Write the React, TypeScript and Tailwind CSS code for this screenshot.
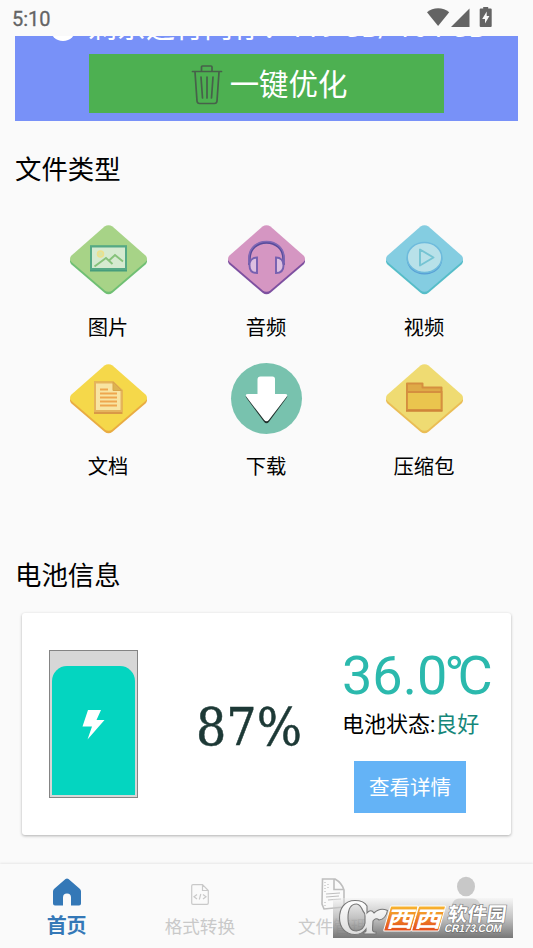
import type { ReactNode } from 'react';

function StatusBar() {
  return (
    <div className="flex h-9 items-start justify-between pl-3 pr-[41px] text-[#646464]">
      <span className="mt-[7px] text-[20px] leading-6 [-webkit-text-stroke:0.3px_#646464]">5:10</span>
      <svg className="mt-[6px]" width="66" height="22" viewBox="426 6 66 22" fill="#646464">
        <path d="M427 12.3C433 7 443.200 7 449.200 12.300L438.100 26Z" />
        <path d="M451 27L469.500 8.500V27Z" />
        <path fillRule="evenodd" d="M483.500 7h5v1.500h2.500q1 0 1 1V26q0 1-1 1h-10q-1 0-1-1V9.500q0-1 1-1h2.500ZM487 11.500L482.500 19h2.800v4.500L489.700 16h-2.700Z" transform="translate(-0.300 0)" />
      </svg>
    </div>
  );
}

function Diamond({ face, edge, children }: { face: string; edge: string; children: ReactNode }) {
  const outline =
    'M34.500 1.600Q38.500 -1.200 42.500 1.600L75.500 30.500Q78.500 33.500 75.500 37L42.500 65.200Q38.500 68.200 34.500 65.200L1.500 37Q-1.500 33.500 1.500 30.500Z';
  return (
    <svg width="77" height="70" viewBox="0 0 77 70">
      <path d={outline} fill={edge} transform="translate(0 2.600)" />
      <path d={outline} fill={face} />
      {children}
    </svg>
  );
}

function PhotoIcon() {
  return (
    <Diamond face="#a7d387" edge="#6fbf73">
      <rect x="20" y="20.500" width="37" height="26" fill="#469d7c" />
      <rect x="21" y="21.500" width="35" height="22.500" fill="#d6ead0" stroke="#55a985" strokeWidth="2" />
      <circle cx="30.500" cy="29" r="3" fill="#d8e4a5" stroke="#ece08c" strokeWidth="1.500" />
      <path d="M24.500 41.500L36 33L42.500 39M38.500 36L45 30L53 36.500" fill="none" stroke="#86c27a" strokeWidth="1.900" />
    </Diamond>
  );
}

function AudioIcon() {
  return (
    <Diamond face="#d596c2" edge="#7d50a0">
      <path d="M21.500 40V34C21.500 12 55.500 12 55.500 34V40" fill="none" stroke="#574b9b" strokeWidth="2.500" />
      <path d="M21 38V33C21 11 56 11 56 33V38" fill="none" stroke="#8068b5" strokeWidth="1.500" />
      <path d="M29 32.500V48C24.500 48 21.500 45.500 21.500 40.500S24.500 32.500 29 32.500ZM48 32.500V48C52.500 48 55.500 45.500 55.500 40.500S52.500 32.500 48 32.500Z" fill="#ddbfe0" stroke="#7660b0" strokeWidth="1.900" />
    </Diamond>
  );
}

function VideoIcon() {
  return (
    <Diamond face="#84cde1" edge="#56bdc8">
      <ellipse cx="38.500" cy="34" rx="17.800" ry="15.500" fill="#579fd6" />
      <ellipse cx="38.500" cy="32.500" rx="17.300" ry="15" fill="#b8e1e9" stroke="#6ebbdc" strokeWidth="1.500" />
      <path d="M34 24.500V40.500L47.500 32.500Z" fill="none" stroke="#75c4d3" strokeWidth="1.900" strokeLinejoin="round" />
    </Diamond>
  );
}

function DocumentIcon() {
  return (
    <Diamond face="#f5d84a" edge="#e9ac42">
      <path d="M24 17.500H43.500L52.500 26V50H24Z" fill="#d99947" />
      <path d="M25 18.500H43L51.500 26.500V47H25Z" fill="#f8e4a2" stroke="#e5b45c" strokeWidth="2" />
      <path d="M43 18V26.500H51.500Z" fill="#ddb351" stroke="#d9a64b" />
      <path d="M30 25.500H38M30 29.500H47M30 33.500H47M30 37.500H47M30 41.500H47" stroke="#eea64e" strokeWidth="1.900" />
    </Diamond>
  );
}

function DownloadIcon() {
  return (
    <svg width="77" height="70" viewBox="0 0 77 70" className="overflow-visible">
      <circle cx="38.500" cy="34.500" r="35.500" fill="#78c2ae" />
      <path d="M20 31H57Q60.500 31 58.500 34L41 57.800Q38.500 60.800 36 57.800L18.500 34Q16.500 31 20 31Z" fill="#20302c" />
      <path d="M32.500 12.500H44.500Q47 12.500 47 15V30H57Q60.500 30 58.500 33L41 55.800Q38.500 58.800 36 55.800L18.500 33Q16.500 30 20 30H29.500V15.500Q29.500 12.500 32.500 12.500Z" fill="#fff" />
    </svg>
  );
}

function ArchiveIcon() {
  return (
    <Diamond face="#efdb72" edge="#eabd55">
      <path d="M21 19.500H36.500V23.500H55.500V46H21Z" fill="#dfaa47" stroke="#d58f3f" strokeWidth="2" strokeLinejoin="round" />
      <path d="M21 28H55.500V46H21Z" fill="#eac54e" stroke="#d58f3f" strokeWidth="1.800" />
      <path d="M20 47H56.500" stroke="#ce8238" strokeWidth="1.500" />
    </Diamond>
  );
}

const fileTypes = [
  { label: '图片', icon: <PhotoIcon /> },
  { label: '音频', icon: <AudioIcon /> },
  { label: '视频', icon: <VideoIcon /> },
  { label: '文档', icon: <DocumentIcon /> },
  { label: '下载', icon: <DownloadIcon /> },
  { label: '压缩包', icon: <ArchiveIcon /> },
];

function MemoryBanner() {
  return (
    <section className="ml-[15px] flex h-[84.500px] w-[503px] flex-col overflow-hidden bg-[#7891f8] text-white">
      <div className="-mt-[26px] flex h-[36px] shrink-0 items-center whitespace-nowrap pl-[35px] text-[29px] leading-9">
        <span className="mr-[12px] size-[26px] rounded-full bg-white" />
        <span className="w-[201px]">剩余运行内存：</span>
        <span className="text-[27.600px]">119 GB/ 164 GB</span>
      </div>
      <button className="ml-[74px] mt-[8px] flex h-[59px] w-[355px] shrink-0 items-center justify-center bg-[#4db051] pl-[6px] pt-[2px] text-[29.400px]">
        <svg className="mr-[7px] -ml-px" width="32" height="42" viewBox="0 0 32 42" fill="none" stroke="#47604a" strokeWidth="1.700" strokeLinecap="round" strokeLinejoin="round">
          <path d="M1.500 7.500H30.500M10.500 7V3Q10.500 2 11.500 2H20Q21 2 21 3V7M4 8L6 37Q6.300 39.500 8.500 39.500H23.500Q25.700 39.500 26 37L28 8M10 13L11.500 34M16 13V34M22 13L20.500 34" />
        </svg>
        <span className="pt-[2px]">一键优化</span>
      </button>
    </section>
  );
}

function BatteryCard() {
  return (
    <section className="ml-[22px] flex h-[222px] w-[489px] rounded-[3px] bg-white shadow-[0_1px_3px_rgba(0,0,0,0.3)]">
      <div className="ml-[27px] mt-[37px] flex h-[148px] w-[89px] flex-col justify-end border-[1.500px] border-[#848484] bg-[#d7d7d7] px-[2px] pb-[2px]">
        <div className="flex h-[129px] items-start justify-center rounded-t-[15px] bg-[#04d5c0]">
          <svg className="mt-[42px]" width="23" height="32" viewBox="0 0 23 32">
            <path d="M6 2H19L14.500 12H22.500L5.500 31.500L10 18.500H0.500Z" fill="#fff" />
          </svg>
        </div>
      </div>
      <div className="ml-[58px] mt-[80px] w-[146px] whitespace-nowrap font-['DejaVu_Serif_Condensed','DejaVu_Serif',serif] text-[53px] leading-[68px] text-[#1d3936] [-webkit-text-stroke:0.5px_#1d3936]">87%</div>
      <div className="flex flex-col">
        <div className="mt-[31px] h-[64px] whitespace-nowrap text-[54px] leading-[64px] text-[#2bb9ad]">
          36.0<span className="-ml-[3px] tracking-[-7px]">°C</span>
        </div>
        <p className="mt-[1px] whitespace-nowrap text-[22px] leading-8 text-black">
          电池状态:<span className="text-[#16877a]">良好</span>
        </p>
        <button className="ml-[12px] mt-[20px] h-[52px] w-[112px] bg-[#64b3f6] pt-[4px] text-[20.500px] text-white">查看详情</button>
      </div>
    </section>
  );
}

function BottomNav() {
  return (
    <nav className="grid h-[84px] w-full grid-cols-4 bg-[#fafafa] text-center text-[17.600px] text-[#c9c9c9] shadow-[0_-1px_2px_rgba(0,0,0,0.08)]">
      <div className="flex flex-col items-center text-[#3478b7]">
        <svg className="mt-[14px]" width="28" height="28" viewBox="0 0 28 28" fill="currentColor">
          <path d="M12.500 1.100Q14 -0.200 15.500 1.100L27 11Q28 12 28 13.500V25.500Q28 27.500 26 27.500H18V19.500Q18 15.500 14 15.500T10 19.500V27.500H2Q0 27.500 0 25.500V13.500Q0 12 1 11Z" />
        </svg>
        <span className="mt-[6px] text-[20px] font-bold leading-7">首页</span>
      </div>
      <div className="flex flex-col items-center">
        <svg className="mt-[20px]" width="18" height="21" viewBox="0 0 18 21" fill="none" stroke="currentColor" strokeWidth="1.200">
          <path d="M2 0.700H11.500L17.300 6.500V19Q17.300 20.300 16 20.300H2Q0.700 20.300 0.700 19V2Q0.700 0.700 2 0.700ZM11.500 1V6.500H17M6 10.500L3 12.800L6 15M12 10.500L15 12.800L12 15M9.800 10L8.300 15.500" />
        </svg>
        <span className="mt-[8px] leading-7">格式转换</span>
      </div>
      <div className="flex flex-col items-center">
        <svg className="mt-[14px]" width="24" height="32" viewBox="0 0 24 32" fill="none" stroke="#bebebe" strokeWidth="1.600">
          <path d="M1.500 1H14Q21 5 23 12V29L3 31L1 26ZM13 1.500V11.500H22.500" />
          <path d="M5 16L19 15M5 19L18 18M7 22L20 21" strokeWidth="1.200" />
          <path d="M4 4V14M7 6V12M4 24V28" strokeDasharray="1 2" strokeWidth="1.200" />
        </svg>
        <span className="mt-[3px] leading-7">文件管理</span>
      </div>
      <div className="flex flex-col items-center">
        <svg className="mt-[12px]" width="30" height="35" viewBox="0 0 30 35" fill="#c8c8c8">
          <ellipse cx="15" cy="10.500" rx="9" ry="9.800" />
          <path d="M0 35Q0 22.500 9 22.500H21Q30 22.500 30 35Z" />
        </svg>
        <span className="mt-[1px] leading-7">我的</span>
      </div>
    </nav>
  );
}

function Watermark() {
  return (
    <div className="absolute left-[333px] top-[898px] h-[40px] w-[180px] bg-linear-to-b from-[#f0f0f0]/40 via-[#b0b0b0]/75 to-[#707070]/95">
      <svg width="180" height="40" viewBox="0 0 180 40" className="overflow-visible">
        <defs>
          <linearGradient id="silver" x1="0" y1="0" x2="0" y2="1">
            <stop offset="0" stopColor="#fff" />
            <stop offset="1" stopColor="#dcdcdc" />
          </linearGradient>
          <linearGradient id="amber" x1="0" y1="0" x2="0" y2="1">
            <stop offset="0" stopColor="#f8b62f" />
            <stop offset="1" stopColor="#e34b1b" />
          </linearGradient>
        </defs>
        <path fillRule="evenodd" d="M34 8Q31 2.500 22 2.500C11 2.500 6.500 11 6.500 20S12 36.500 22 36.500Q29 36.500 33 31L33 33Q33 34 31 34V36H43V34Q39 34 39.500 31L40 23Q43 19 46 22Q53 21 54.500 12.500Q47 9 41 15Q38 10.500 34 15ZM30 13Q27 6 23.500 6C17 6 15 13 15 20S17 33 23.500 33Q31 32 32 25V18Q32 15 30 13Z" fill="url(#silver)" stroke="#777" strokeWidth="1.100" />
        <g transform="skewX(-16)" fill="url(#amber)" stroke="#fff" strokeWidth="1">
          <rect x="60" y="8" width="27.500" height="25" rx="1" />
          <rect x="88" y="8" width="27" height="25" rx="1" />
        </g>
        <g fontFamily="'Noto Sans CJK SC', sans-serif" fontWeight="700" fill="#fff">
          <text transform="translate(53 28.500) skewX(-16) scale(1.220 1)" fontSize="22">西</text>
          <text transform="translate(81 28.500) skewX(-16) scale(1.220 1)" fontSize="22">西</text>
          <text transform="translate(114 22.500) skewX(-8)" fontSize="19.500" stroke="#777" strokeWidth="1.200" paintOrder="stroke">软件园</text>
        </g>
        <text transform="translate(111 34) skewX(-12)" fontFamily="'Liberation Sans', sans-serif" fontSize="11" fontWeight="700" fill="#fff" stroke="#666" strokeWidth="1" paintOrder="stroke" textLength="57" lengthAdjust="spacingAndGlyphs">CR173.COM</text>
      </svg>
    </div>
  );
}

export default function App() {
  return (
    <main className="relative flex h-[948px] w-[533px] flex-col overflow-hidden bg-[#fafafa] font-[Roboto,'Noto_Sans_CJK_SC',sans-serif] text-black">
      <StatusBar />
      <MemoryBanner />
      <h2 className="ml-[15px] mt-[30px] h-[38px] text-[26.400px] leading-[38px]">文件类型</h2>
      <div className="ml-[29px] mt-[36px] grid w-[474px] auto-rows-[139px] grid-cols-3">
        {fileTypes.map((item) => (
          <div key={item.label} className="flex flex-col items-center">
            {item.icon}
            <span className="mt-[19px] text-[20.300px] leading-7">{item.label}</span>
          </div>
        ))}
      </div>
      <h2 className="ml-[15px] mt-[54px] h-[38px] text-[26.400px] leading-[38px]">电池信息</h2>
      <div className="mt-[18px] flex-1">
        <BatteryCard />
      </div>
      <BottomNav />
      <Watermark />
    </main>
  );
}
